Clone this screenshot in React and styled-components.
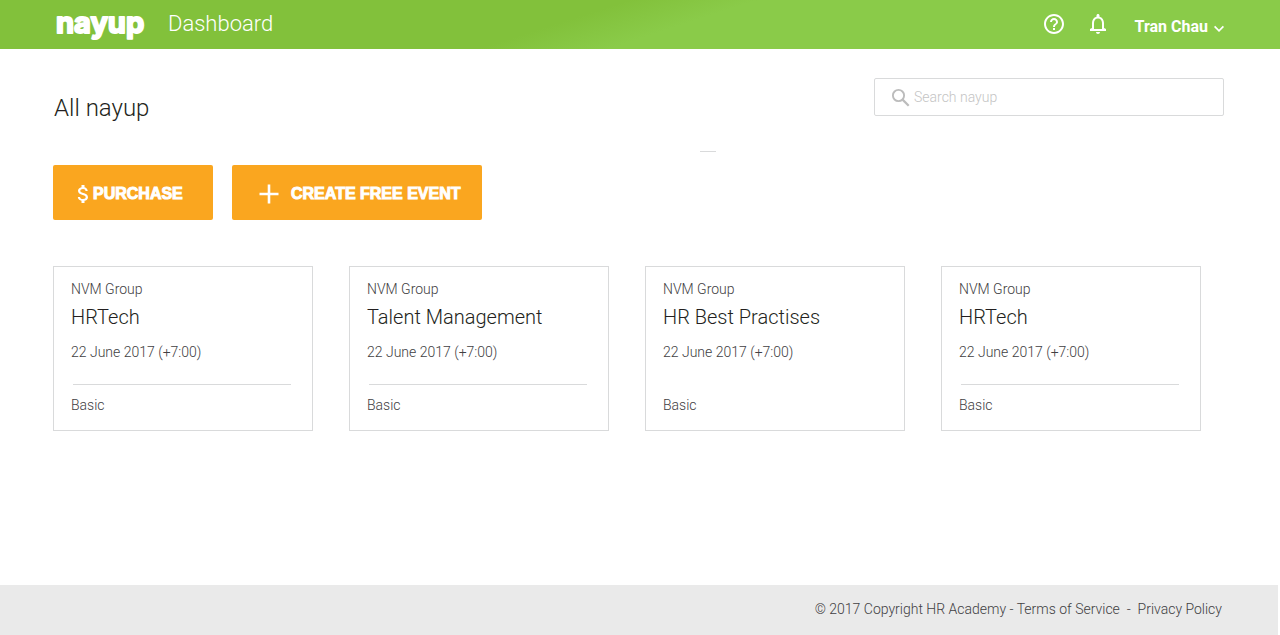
import React from "react";
import styled, { createGlobalStyle } from "styled-components";

const GlobalStyle = createGlobalStyle`
  *, *::before, *::after { box-sizing: border-box; }
  body {
    margin: 0;
    background: #fff;
    color: #231f20;
    font-family: Roboto, "Liberation Sans", sans-serif;
    font-weight: 300;
    font-size: 14px;
    line-height: 20px;
  }
  button, input { font: inherit; color: inherit; }
  h1, h2, p { margin: 0; font-weight: 300; }
`;

const Page = styled.div`
  display: flex;
  flex-direction: column;
  min-height: 100vh;
`;

const Header = styled.header`
  display: flex;
  align-items: center;
  justify-content: space-between;
  height: 49px;
  padding: 0 56px 0 54px;
  color: #fff;
  background: linear-gradient(162deg, #82c13b 44%, #8acb49 53%);
`;

const Brand = styled.div`
  display: flex;
  align-items: center;
  gap: 20px;
`;

const Logo = styled.a`
  display: block;
  height: 48px;
  color: #fff;

  text {
    font-family: Inter, sans-serif;
    font-weight: 700;
    font-size: 29px;
    fill: #fff;
    stroke: #fff;
    stroke-width: 2px;
    stroke-linejoin: round;
  }
`;

const Section = styled.span`
  font-size: 22px;
  line-height: 24px;
  padding-bottom: 2px;
`;

const Account = styled.nav`
  display: flex;
  align-items: center;
`;

const IconButton = styled.button`
  display: flex;
  padding: 0 0 2px;
  border: 0;
  margin-right: 20px;
  background: none;
  cursor: pointer;
`;

const UserButton = styled(IconButton)`
  align-items: center;
  gap: 6px;
  margin: 6px 0 0 5px;
  font-size: 16px;
  font-weight: 700;

  svg { margin-top: 4px; }
`;

const Main = styled.main`
  flex: 1;
  padding: 29px 56px 40px 53px;
`;

const TopRow = styled.div`
  display: flex;
  align-items: flex-start;
  justify-content: space-between;
`;

const Title = styled.h1`
  padding: 16px 0 0 1px;
  font-size: 24px;
  line-height: 28px;
`;

const Search = styled.label`
  display: flex;
  align-items: center;
  gap: 2px;
  width: 350px;
  height: 38px;
  padding: 0 15px;
  border: 1px solid #d9dadb;
  border-radius: 2px;

  input {
    flex: 1;
    min-width: 0;
    padding: 0;
    border: 0;
    outline: 0;
    background: none;
    font-size: 14px;
  }
  input::placeholder { color: #c4c4c4; opacity: 1; }
`;

const Mark = styled.hr`
  width: 16px;
  height: 1px;
  margin: 29px 0 13px calc(50% + 61px);
  border: 0;
  background: #d9dadb;
`;

const Actions = styled.div`
  display: flex;
  gap: 19px;
`;

const ActionButton = styled.button`
  display: flex;
  align-items: center;
  gap: ${(p) => p.$gap};
  height: 55px;
  padding: 2px 20px 0 ${(p) => p.$inset};
  min-width: ${(p) => p.$width};
  border: 0;
  border-radius: 2px;
  background: #faa61f;
  color: #fff;
  font-family: "Liberation Sans", Arial, sans-serif;
  font-size: 16px;
  font-weight: 700;
  -webkit-text-stroke: 1px #fff;
  white-space: nowrap;
  cursor: pointer;
`;

const Cards = styled.div`
  display: grid;
  grid-template-columns: repeat(4, 1fr);
  gap: 36px;
  margin: 46px 23px 0 0;
`;

const Card = styled.article`
  min-height: 165px;
  padding: 12px 21px 14px 17px;
  border: 1px solid #d9dadb;
`;

const CardText = styled.p`
  color: #414042;
`;

const CardTitle = styled.h2`
  margin: 6px 0 13px;
  font-size: 20px;
  line-height: 24px;
`;

const Rule = styled.hr`
  height: 1px;
  margin: 22px 0 10px 2px;
  border: 0;
  background: ${(p) => (p.$hidden ? "transparent" : "#d9dadb")};
`;

const Footer = styled.footer`
  display: flex;
  align-items: center;
  justify-content: flex-end;
  height: 50px;
  margin-right: 2px;
  padding: 0 56px 2px;
  background: #eaeaea;
  color: #414042;

  a { color: inherit; text-decoration: none; }
`;

const FooterText = styled.p`
  white-space: pre-wrap;
`;

const events = [
  { title: "HRTech" },
  { title: "Talent Management" },
  { title: "HR Best Practises", plain: true },
  { title: "HRTech" },
];

function EventCard({ title, plain }) {
  return (
    <Card>
      <CardText>NVM Group</CardText>
      <CardTitle>{title}</CardTitle>
      <CardText>22 June 2017 (+7:00)</CardText>
      <Rule $hidden={plain} />
      <CardText>Basic</CardText>
    </Card>
  );
}

export default function App() {
  return (
    <Page>
      <GlobalStyle />
      <Header>
        <Brand>
          <Logo href="#home">
            <svg width="94" height="48">
              <text x="2" y="32">nayup</text>
            </svg>
          </Logo>
          <Section>Dashboard</Section>
        </Brand>
        <Account>
          <IconButton type="button" aria-label="Help">
            <svg width="24" height="24" viewBox="0 0 24 24" fill="#fff">
              <path d="M11 18h2v-2h-2v2zm1-16C6.480 2 2 6.480 2 12s4.480 10 10 10 10-4.480 10-10S17.520 2 12 2zm0 18c-4.410 0-8-3.590-8-8s3.590-8 8-8 8 3.590 8 8-3.590 8-8 8zm0-14c-2.210 0-4 1.790-4 4h2c0-1.100.9-2 2-2s2 .9 2 2c0 2-3 1.750-3 5h2c0-2.250 3-2.500 3-5 0-2.210-1.790-4-4-4z" />
            </svg>
          </IconButton>
          <IconButton type="button" aria-label="Notifications">
            <svg width="24" height="24" viewBox="0 0 24 24" fill="#fff">
              <path d="M12 22c1.100 0 2-.9 2-2h-4c0 1.100.9 2 2 2zm6-6v-5c0-3.070-1.630-5.640-4.500-6.320V3.500c0-.83-.67-1.500-1.500-1.500s-1.500.67-1.500 1.500v1.180C7.640 5.360 6 7.920 6 11v5l-2 1v2h16v-2l-2-1zm-2 1H8v-6c0-2.480 1.510-4.500 4-4.500s4 2.020 4 4.500v6z" />
            </svg>
          </IconButton>
          <UserButton type="button">
            Tran Chau
            <svg width="10" height="8" viewBox="0 0 10 8" fill="none" stroke="#fff" strokeWidth="1.700">
              <path d="M0.600 1.400L5 5.800L9.400 1.400" />
            </svg>
          </UserButton>
        </Account>
      </Header>
      <Main>
        <TopRow>
          <Title>All nayup</Title>
          <Search>
            <svg width="22" height="24" viewBox="0 0 22 24" fill="none" stroke="#bcbcbc">
              <circle cx="8.500" cy="10.500" r="5.600" strokeWidth="1.900" />
              <path d="M12.600 14.600L18.700 20.700" strokeWidth="2.200" />
            </svg>
            <input type="text" aria-label="Search nayup" placeholder="Search nayup" />
          </Search>
        </TopRow>
        <Mark />
        <Actions>
          <ActionButton type="button" $width="160px" $gap="4px" $inset="24px">
            <svg width="12" height="20" viewBox="0 0 12 20" fill="#fff">
              <path d="M6.300 8.900c-2.270-.59-3-1.200-3-2.150 0-1.090 1.010-1.850 2.700-1.850 1.780 0 2.440.85 2.500 2.100h2.210c-.07-1.720-1.120-3.300-3.210-3.810V1h-3v2.160C2.560 3.580 1 4.840 1 6.770c0 2.310 1.910 3.460 4.700 4.130 2.500.6 3 1.480 3 2.410 0 .69-.49 1.790-2.700 1.790-2.060 0-2.870-.92-2.980-2.100H.820c.12 2.190 1.760 3.420 3.680 3.830V19h3v-2.150c1.950-.37 3.500-1.500 3.500-3.550 0-2.840-2.430-3.810-4.700-4.400z" />
            </svg>
            PURCHASE
          </ActionButton>
          <ActionButton type="button" $width="250px" $gap="12px" $inset="27px">
            <svg width="20" height="20" viewBox="0 0 20 20" stroke="#fff" strokeWidth="2.600">
              <path d="M10 0.500V19.500M0.500 10H19.500" />
            </svg>
            CREATE FREE EVENT
          </ActionButton>
        </Actions>
        <Cards>
          {events.map((event, i) => (
            <EventCard key={i} {...event} />
          ))}
        </Cards>
      </Main>
      <Footer>
        <FooterText>
          © 2017 Copyright HR Academy - <a href="#terms">Terms of Service</a>
          {"  -  "}
          <a href="#privacy">Privacy Policy</a>
        </FooterText>
      </Footer>
    </Page>
  );
}
